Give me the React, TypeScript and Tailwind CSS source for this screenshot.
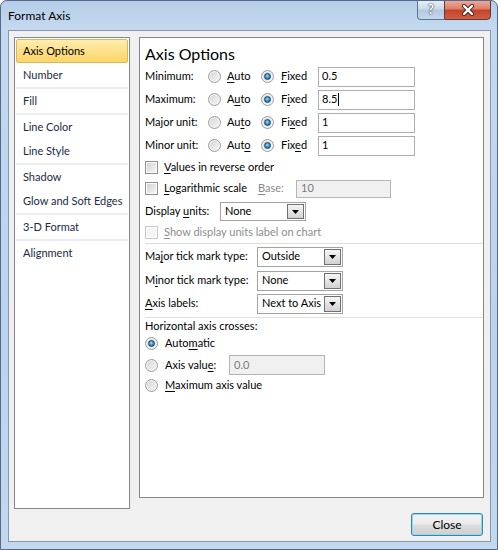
import { ReactNode } from "react"

function Radio({ checked = false }: { checked?: boolean }) {
  return (
    <span className="flex h-[13px] w-[13px] shrink-0 items-center justify-center rounded-full border border-[#9c9c9c] bg-[linear-gradient(135deg,#d3d3d3,#f8f8f8)] shadow-[inset_0_0_0_1px_#f4f4f4]">
      {checked && (
        <span className="h-[7px] w-[7px] rounded-full border border-[#1a4a70] bg-[radial-gradient(circle_at_45%_40%,#a6e4fb_0%,#2f8fc8_50%,#104570_100%)]" />
      )}
    </span>
  )
}

function Check({ disabled = false }: { disabled?: boolean }) {
  return (
    <span
      className={
        disabled
          ? "flex h-[13px] w-[13px] shrink-0 border border-[#c8c8c8] bg-white p-[1px]"
          : "flex h-[13px] w-[13px] shrink-0 border border-[#8f8f8f] bg-white p-[1px]"
      }
    >
      <span
        className={
          disabled
            ? "flex-1 bg-[#f4f4f4]"
            : "flex-1 bg-[linear-gradient(135deg,#d2d2d2,#f6f6f6)]"
        }
      />
    </span>
  )
}

function U({ children }: { children: ReactNode }) {
  return <span className="underline underline-offset-[2px]">{children}</span>
}

function TextBox({ value, width, caret = false, disabled = false }: { value: string; width: string; caret?: boolean; disabled?: boolean }) {
  return (
    <div
      className={
        disabled
          ? `flex h-[18px] ${width} items-center border border-[#b5b5b5] bg-[#f0f0f0] pl-[4px] text-[#7a7a7a]`
          : `flex h-[20px] ${width} items-center border border-[#abadb3] bg-white pl-[3px]`
      }
    >
      <span>{value}</span>
      {caret && <span className="ml-[1px] h-[13px] w-px bg-black" />}
    </div>
  )
}

function Combo({ value, w, h }: { value: string; w: string; h: string }) {
  return (
    <div className={`flex ${w} ${h} border border-[#a3a3a3] bg-white`}>
      <span className="flex flex-1 items-center pl-[4px] whitespace-nowrap overflow-hidden">{value}</span>
      <span className="m-px flex w-[17px] items-center justify-center border border-[#707070] bg-[linear-gradient(180deg,#f6f6f6,#d2d2d2)]">
        <svg width="7" height="4" viewBox="0 0 7 4">
          <polygon points="0,0 7,0 3.5,4" fill="#000" />
        </svg>
      </span>
    </div>
  )
}

function UnitRow({ label, auto, fixed, value, caret }: { label: string; auto: ReactNode; fixed: ReactNode; value: string; caret?: boolean }) {
  return (
    <div className="flex h-[23px] items-center">
      <span className="w-[63px]">{label}</span>
      <Radio />
      <span className="ml-[6px] w-[34px]">{auto}</span>
      <Radio checked />
      <span className="ml-[7px] w-[37px]">{fixed}</span>
      <TextBox value={value} width="w-[97px]" caret={caret} />
    </div>
  )
}

const navItems: (string | null)[] = [
  "Number", null, "Fill", null, "Line Color", "Line Style", null, "Shadow", "Glow and Soft Edges", null, "3-D Format", null, "Alignment",
]

export default function App() {
  return (
    <div className="h-[550px] w-[498px] overflow-hidden rounded-t-[7px] border border-[#55698a] bg-[linear-gradient(180deg,#b5cde8_0%,#c4d9ef_5%,#bcd3ec_60%,#c3d8ee_100%)] font-['Lato',sans-serif] text-[11px] text-black">
      <div className="flex h-[29px] justify-between pl-[7px] pr-[6px]">
        <span className="self-center text-[12px]">Format Axis</span>
        <div className="-mt-px flex self-start">
          <div className="flex h-[20px] w-[27px] items-center justify-center rounded-bl-[4px] border border-r-0 border-[#5d7391] bg-[linear-gradient(180deg,#e6eef7_0%,#ccdaea_45%,#b3c7de_50%,#c5d7eb_100%)] text-[13px] font-bold text-white [text-shadow:0_0_2px_#2c3e55,0_0_1px_#2c3e55]">
            ?
          </div>
          <div className="flex h-[20px] w-[47px] items-center justify-center rounded-br-[4px] border border-[#5a3b36] bg-[linear-gradient(180deg,#eba999_0%,#dc7d66_45%,#c4432a_50%,#d55d41_100%)]">
            <svg width="14" height="12" viewBox="0 0 14 12">
              <path d="M3 2 L11 10 M11 2 L3 10" stroke="#4a2420" strokeWidth="4.2" strokeLinecap="round" />
              <path d="M3 2 L11 10 M11 2 L3 10" stroke="#ffffff" strokeWidth="2.4" strokeLinecap="round" />
            </svg>
          </div>
        </div>
      </div>

      <div className="ml-[7px] flex h-[512px] w-[483px] flex-col border border-[#8798ae] bg-[#f0f0f0] pl-[5px] pt-[6px]">
        <div className="flex items-start gap-[9px]">
          <div className="flex h-[472px] w-[116px] flex-col border border-[#828790] bg-white p-px text-[#1c2a44]">
            <div className="flex h-[24px] items-center rounded-[2px] border border-[#dcb65c] bg-[linear-gradient(180deg,#fdeeb0_0%,#fde08a_50%,#fcd566_100%)] pl-[6px] text-black">
              Axis Options
            </div>
            {navItems.map((item, i) =>
              item === null ? (
                <div key={i} className="h-[2px] bg-[#ecedf0]" />
              ) : (
                <div key={i} className="flex h-[24px] items-center pl-[7px]">
                  {item}
                </div>
              )
            )}
          </div>

          <div className="flex h-[461px] w-[345px] flex-col border border-[#828790] bg-white pl-[5px] pt-[4px]">
            <div className="h-[23px] text-[16px] leading-[23px]">Axis Options</div>
            <UnitRow label="Minimum:" auto={<><U>A</U>uto</>} fixed={<><U>F</U>ixed</>} value="0.5" />
            <UnitRow label="Maximum:" auto={<>A<U>u</U>to</>} fixed={<>F<U>i</U>xed</>} value="8.5" caret />
            <UnitRow label="Major unit:" auto={<>Au<U>t</U>o</>} fixed={<>Fi<U>x</U>ed</>} value="1" />
            <UnitRow label="Minor unit:" auto={<>Aut<U>o</U></>} fixed={<>Fix<U>e</U>d</>} value="1" />

            <div className="flex h-[21px] items-center">
              <Check />
              <span className="ml-[6px]"><U>V</U>alues in reverse order</span>
            </div>
            <div className="flex h-[21px] items-center">
              <Check />
              <span className="ml-[6px] w-[94px]"><U>L</U>ogarithmic scale</span>
              <span className="w-[38px] text-[#8a8a8a]"><U>B</U>ase:</span>
              <TextBox value="10" width="w-[95px]" disabled />
            </div>
            <div className="flex h-[25px] items-center">
              <span className="w-[75px]">Display <U>u</U>nits:</span>
              <Combo value="None" w="w-[86px]" h="h-[19px]" />
            </div>
            <div className="flex h-[16px] items-center">
              <Check disabled />
              <span className="ml-[6px] text-[#8d8d8d]"><U>S</U>how display units label on chart</span>
            </div>

            <div className="mt-[3px] h-px bg-[#dedede]" />
            <div className="flex h-[25px] items-center">
              <span className="w-[112px]">Ma<U>j</U>or tick mark type:</span>
              <Combo value="Outside" w="w-[86px]" h="h-[20px]" />
            </div>
            <div className="flex h-[23px] items-center">
              <span className="w-[112px]">M<U>i</U>nor tick mark type:</span>
              <Combo value="None" w="w-[86px]" h="h-[20px]" />
            </div>
            <div className="flex h-[23px] items-center">
              <span className="w-[112px]"><U>A</U>xis labels:</span>
              <Combo value="Next to Axis" w="w-[86px]" h="h-[20px]" />
            </div>

            <div className="mt-[2px] h-px bg-[#dedede]" />
            <div className="flex h-[16px] items-center">Horizontal axis crosses:</div>
            <div className="flex h-[18px] items-center">
              <Radio checked />
              <span className="ml-[7px]">Auto<U>m</U>atic</span>
            </div>
            <div className="flex h-[26px] items-center">
              <Radio />
              <span className="ml-[7px] w-[64px]">Axis valu<U>e</U>:</span>
              <TextBox value="0.0" width="w-[96px] !h-[20px]" disabled />
            </div>
            <div className="flex h-[14px] items-center">
              <Radio />
              <span className="ml-[7px]"><U>M</U>aximum axis value</span>
            </div>
          </div>
        </div>

        <div className="mt-[4px] flex justify-end pr-[7px]">
          <button className="flex h-[23px] w-[72px] items-center justify-center rounded-[3px] border border-[#3c7fb1] bg-[linear-gradient(180deg,#f3f3f3_0%,#ebebeb_48%,#dddddd_52%,#cfcfcf_100%)] text-[12px] shadow-[inset_0_0_0_1px_#8fdcf8]">
            Close
          </button>
        </div>
      </div>
    </div>
  )
}
